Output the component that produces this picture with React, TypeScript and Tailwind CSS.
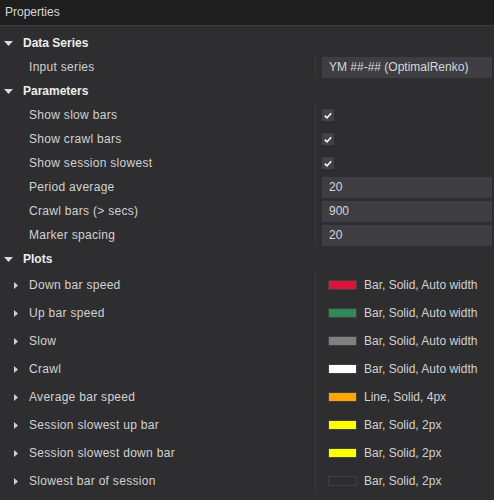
import React from 'react';

type Plot = { name: string; color: string; desc: string };

const plots: Plot[] = [
  { name: 'Down bar speed', color: '#dc143c', desc: 'Bar, Solid, Auto width' },
  { name: 'Up bar speed', color: '#2e8b57', desc: 'Bar, Solid, Auto width' },
  { name: 'Slow', color: '#808080', desc: 'Bar, Solid, Auto width' },
  { name: 'Crawl', color: '#ffffff', desc: 'Bar, Solid, Auto width' },
  { name: 'Average bar speed', color: '#ffa500', desc: 'Line, Solid, 4px' },
  { name: 'Session slowest up bar', color: '#ffff00', desc: 'Bar, Solid, 2px' },
  { name: 'Session slowest down bar', color: '#ffff00', desc: 'Bar, Solid, 2px' },
  { name: 'Slowest bar of session', color: 'transparent', desc: 'Bar, Solid, 2px' },
];

function SectionHeader({ title }: { title: string }) {
  return (
    <div className="flex h-[24px] items-center">
      <svg width="9" height="5" viewBox="0 0 9 5" className="ml-[4px] mr-[10px]">
        <path d="M0 0 L9 0 L4.5 5 Z" fill="#d8d8d8" />
      </svg>
      <span className="font-bold text-[#ececec]">{title}</span>
    </div>
  );
}

function Row({ label, children }: { label: string; children?: React.ReactNode }) {
  return (
    <div className="flex h-[24px] items-center">
      <div className="h-full w-[316px] border-r border-[#3a3a3d] pl-[29px] flex items-center tracking-[0.3px] text-[#d2d2d2]">
        {label}
      </div>
      <div className="flex h-full flex-1 items-center pl-[6px] pr-[2px]">{children}</div>
    </div>
  );
}

function Field({ value }: { value: string }) {
  return (
    <div className="flex h-[21px] flex-1 items-center bg-[#3e3e42] pl-[7px] text-[#d8d8d8]">{value}</div>
  );
}

function Check() {
  return (
    <div className="flex h-[12px] w-[12px] items-center justify-center bg-[#424246]">
      <svg width="8" height="7" viewBox="0 0 8 7">
        <path d="M0.8 3.6 L3 5.8 L7.2 1.2" stroke="#f0f0f0" strokeWidth="1.7" fill="none" />
      </svg>
    </div>
  );
}

export default function App() {
  return (
    <div
      className="h-[500px] w-[494px] overflow-hidden bg-[#2e2e31] text-[12px]"
      style={{ fontFamily: '"Liberation Sans", Arial, sans-serif' }}
    >
      <div className="flex h-[26px] items-center border-b border-[#3c3c3e] bg-[#1e1e1e] pl-[5px] pb-[1px] text-[#d6d6d6]">
        Properties
      </div>

      <div className="pt-[5px]">
        <SectionHeader title="Data Series" />
        <Row label="Input series">
          <Field value="YM ##-## (OptimalRenko)" />
        </Row>

        <SectionHeader title="Parameters" />
        <Row label="Show slow bars">
          <Check />
        </Row>
        <Row label="Show crawl bars">
          <Check />
        </Row>
        <Row label="Show session slowest">
          <Check />
        </Row>
        <Row label="Period average">
          <Field value="20" />
        </Row>
        <Row label="Crawl bars (> secs)">
          <Field value="900" />
        </Row>
        <Row label="Marker spacing">
          <Field value="20" />
        </Row>

        <SectionHeader title="Plots" />
        {plots.map((p) => (
          <div key={p.name} className="flex h-[28px] items-center">
            <div className="flex h-full w-[316px] items-center border-r border-[#3a3a3d] tracking-[0.3px] text-[#d2d2d2]">
              <svg width="4" height="7" viewBox="0 0 4 7" className="ml-[14px] mr-[11px]">
                <path d="M0 0 L4 3.5 L0 7 Z" fill="#d0d0d0" />
              </svg>
              {p.name}
            </div>
            <div className="flex h-full flex-1 items-center pl-[12px] text-[#d2d2d2]">
              <div
                className="mr-[7px] h-[10px] w-[29px] border border-[#3f3f42]"
                style={{ backgroundColor: p.color }}
              />
              {p.desc}
            </div>
          </div>
        ))}
      </div>
    </div>
  );
}
